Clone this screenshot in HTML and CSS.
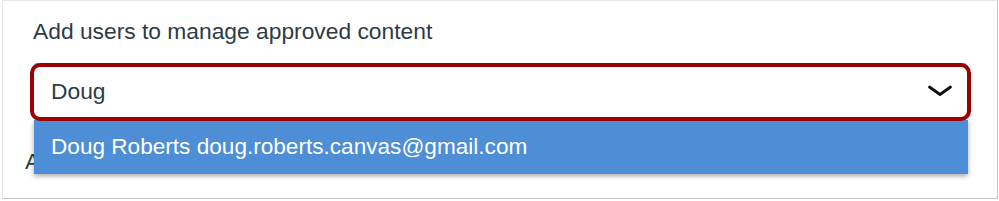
FILE: index.html
```html
<!DOCTYPE html>
<html lang="en">
<head>
    <meta charset="UTF-8">
    <meta name="viewport" content="width=device-width, initial-scale=1.0">
    <title>Add users</title>
    <link rel="stylesheet" href="styles.css">
</head>
<body>
    <div class="panel">
        <div class="label">Add users to manage approved content</div>
        <div class="field">
            <div class="input">
                <span>Doug</span>
                <svg class="chevron" width="24" height="12" viewBox="0 0 24 12">
                    <polyline points="1.5,2 12,9.5 22.5,2" fill="none" stroke="#111" stroke-width="2.8" stroke-linecap="round" stroke-linejoin="round"/>
                </svg>
            </div>
            <div class="menu">Doug Roberts doug.roberts.canvas@gmail.com</div>
            <div class="annotation"></div>
        </div>
        <div class="label label-next">Approvers</div>
    </div>
</body>
</html>
```

FILE: styles.css
```css
body {
    margin: 0;
    font-family: "Liberation Sans", Arial, sans-serif;
    background: #fff;
}
.panel {
    margin: 0 1px 0 2px;
    height: 199px;
    box-sizing: border-box;
    border: 1px solid #e6e6e6;
    border-right-color: #c9c9c9;
    border-bottom-color: #c4c4c4;
    padding: 17px 0 0 30px;
    overflow: hidden;
}
.label {
    font-size: 22.8px;
    line-height: 26px;
    color: #2d3b45;
}
.field {
    position: relative;
    width: 935px;
    margin-top: 19px;
}
.input {
    height: 57px;
    box-sizing: border-box;
    border: 1px solid #7fb0e6;
    border-radius: 4px;
    padding: 0 15px 0 17px;
    display: flex;
    align-items: center;
    justify-content: space-between;
    font-size: 22.8px;
    color: #2d3b45;
}
.chevron {
    display: block;
    margin-top: -1px;
}
.menu {
    position: absolute;
    left: 1px;
    top: 57px;
    width: 934px;
    height: 54px;
    box-sizing: border-box;
    padding-left: 17px;
    display: flex;
    align-items: center;
    background: #4d8ed6;
    color: #fff;
    font-size: 22.6px;
    box-shadow: 0 2px 5px rgba(0, 0, 0, 0.35);
    z-index: 1;
}
.annotation {
    position: absolute;
    left: -3px;
    right: -3px;
    top: 0;
    height: 58px;
    box-sizing: border-box;
    border: 4px solid #9b0000;
    border-radius: 10px;
    z-index: 2;
}
.label-next {
    margin: 28px 0 0 -8px;
}
```
